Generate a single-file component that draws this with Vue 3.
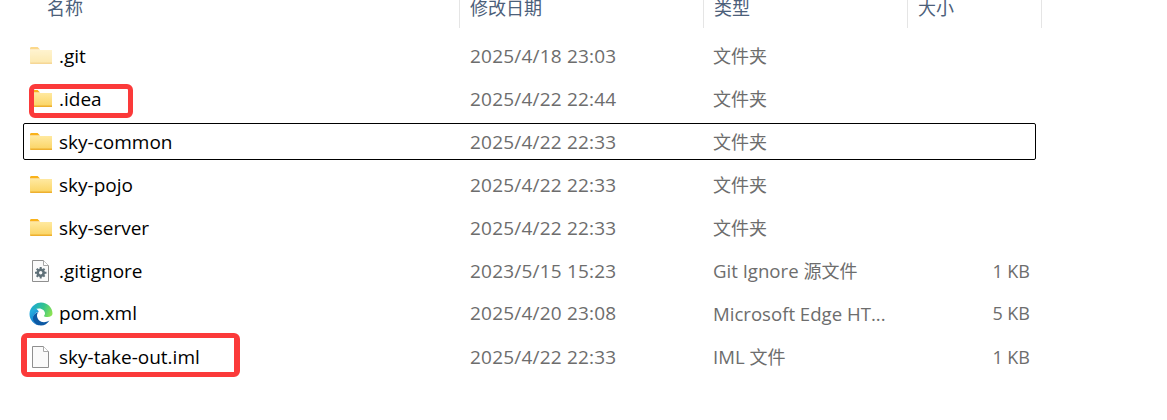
<script setup>
const rows = [
  { name: '.git', date: '2025/4/18 23:03', cjk: '文件夹', size: '', icon: 'folder', faded: true },
  { name: '.idea', date: '2025/4/22 22:44', cjk: '文件夹', size: '', icon: 'folder' },
  { name: 'sky-common', date: '2025/4/22 22:33', cjk: '文件夹', size: '', icon: 'folder', selected: true },
  { name: 'sky-pojo', date: '2025/4/22 22:33', cjk: '文件夹', size: '', icon: 'folder' },
  { name: 'sky-server', date: '2025/4/22 22:33', cjk: '文件夹', size: '', icon: 'folder' },
  { name: '.gitignore', date: '2023/5/15 15:23', latin: 'Git Ignore ', cjk: '源文件', size: '1 KB', icon: 'gear' },
  { name: 'pom.xml', date: '2025/4/20 23:08', latin: 'Microsoft Edge HT...', size: '5 KB', icon: 'edge' },
  { name: 'sky-take-out.iml', date: '2025/4/22 22:33', latin: 'IML ', cjk: '文件', size: '1 KB', icon: 'file' },
]
</script>

<template>
  <div class="page">
    <header class="head">
      <div class="hcell hname">名称</div>
      <div class="hcell">修改日期</div>
      <div class="hcell">类型</div>
      <div class="hcell hlast">大小</div>
    </header>
    <ul class="list">
      <li v-for="r in rows" :key="r.name" class="row" :class="{ selected: r.selected }">
        <div class="name">
          <svg v-if="r.icon === 'folder'" class="icon" :class="{ faded: r.faded }" viewBox="0 1 24 24">
            <defs>
              <linearGradient :id="'fg' + r.name" x1="0" y1="0" x2="0" y2="1">
                <stop offset="0" stop-color="#ffe9a0" />
                <stop offset="1" stop-color="#fbd566" />
              </linearGradient>
            </defs>
            <path d="M1 5.500C1 4.700 1.600 4 2.400 4h6.200l2.400 2.400H1z" fill="#f9b21a" />
            <path d="M1 7h22v13H2c-.6 0-1-.4-1-1z" :fill="'url(#fg' + r.name + ')'" />
            <path d="M1 19.600h22V21H2c-.6 0-1-.5-1-1z" fill="#eeb02f" />
          </svg>
          <svg v-else-if="r.icon === 'gear'" class="icon" viewBox="0 0 24 24">
            <path d="M3.500 1.500h11l5 5v16h-16z" fill="#fafafa" stroke="#8f8f8f" />
            <path d="M14.500 1.500v5h5" fill="#fff" stroke="#a8a8a8" />
            <circle cx="11.700" cy="13.700" r="3" fill="none" stroke="#5f7078" stroke-width="2.600" />
            <path d="M11.700 8v2.500M11.700 17v2.500M6 13.700h2.500M15 13.700h2.500M7.700 9.700l1.600 1.600M14 16l1.600 1.600M7.700 17.700l1.600-1.600M14 11.300l1.600-1.600" stroke="#5f7078" stroke-width="2" />
          </svg>
          <svg v-else-if="r.icon === 'edge'" class="icon" viewBox="0 0 24 24">
            <defs>
              <linearGradient id="eb" x1="0.2" y1="0" x2="0.6" y2="1">
                <stop offset="0" stop-color="#2dc0e8" />
                <stop offset="1" stop-color="#0f72c6" />
              </linearGradient>
              <linearGradient id="eg" x1="0" y1="0.3" x2="1" y2="0.6">
                <stop offset="0" stop-color="#1ba6d8" />
                <stop offset="0.55" stop-color="#33c48c" />
                <stop offset="1" stop-color="#8be253" />
              </linearGradient>
            </defs>
            <path d="M20.500 18.500C18.500 19.800 16.500 20.200 15 20.200 11 20.200 8 17 8 13.500 8 12 8.700 11 9.500 10 6 11 3.500 13.500 3.500 16.500 3.500 20 7 23.500 12 23.500c3.500 0 6.500-2 8.500-5z" fill="#0c59a4" />
            <path d="M10.500 23.400C5 22.700.5 18 .5 12 .5 8.500 2 5.500 4.500 3.500L10 9.500C6.500 10.500 4 13.500 4 16.500c0 3 2.500 5.800 6.500 6.900z" fill="url(#eb)" />
            <path d="M1.500 9C3 3.800 7.500.5 12 .5c6.500 0 11.500 5 11.500 11 0 2-2 3.500-5 3.500-2 0-3.700-.5-3.700-1 .7-.7 1.200-1.500 1.200-2.500C16 9 13.500 6.500 10 6.500 7 6.500 4 7.500 1.500 9z" fill="url(#eg)" />
          </svg>
          <svg v-else class="icon" viewBox="0 0 24 24">
            <path d="M3.500 1.500h11l5 5v16h-16z" fill="#fafafa" stroke="#8f8f8f" />
            <path d="M14.500 1.500v5h5" fill="#fff" stroke="#a8a8a8" />
          </svg>
          <span class="fname">{{ r.name }}</span>
        </div>
        <div class="cell date">{{ r.date }}</div>
        <div class="cell type"><span v-if="r.latin">{{ r.latin }}</span><span v-if="r.cjk" class="cjk">{{ r.cjk }}</span></div>
        <div class="cell size">{{ r.size }}</div>
      </li>
      <li class="mark mark-idea" aria-hidden="true"></li>
      <li class="mark mark-iml" aria-hidden="true"></li>
    </ul>
  </div>
</template>

<style>
html, body { background: #fff; }
</style>

<style scoped>
.page {
  width: 1167px;
  height: 420px;
  overflow: hidden;
  background: #fff;
  font-family: "Open Sans", "Noto Sans CJK SC", sans-serif;
  font-size: 19px;
  position: relative;
}
.head {
  display: grid;
  grid-template-columns: 459px 244px 204px 135px;
  height: 28px;
}
.hcell {
  border-left: 1px solid #e5e5e5;
  padding: 0 0 0 10px;
  color: #4c607a;
  font-size: 18px;
  line-height: 16px;
  height: 28px;
  box-sizing: border-box;
}
.hname {
  border-left: 0;
  padding-left: 47px;
}
.hlast {
  border-right: 1px solid #e5e5e5;
}
.list {
  list-style: none;
  margin: 0;
  padding: 9px 0 0 23px;
  width: 1013px;
  display: flex;
  flex-direction: column;
  gap: 6px;
  position: relative;
}
.row {
  display: grid;
  grid-template-columns: 436px 244px 204px 129px;
  height: 37px;
  align-items: center;
  box-sizing: border-box;
  color: #6d6d6d;
  line-height: 37px;
}
.selected {
  outline: 1px solid #000;
  outline-offset: -1px;
  border-radius: 2px;
}
.name {
  display: flex;
  align-items: center;
  padding-left: 6px;
  color: #000;
}
.icon {
  width: 24px;
  height: 24px;
  flex: none;
}
.faded {
  opacity: 0.5;
}
.fname {
  margin-left: 6px;
}
.cell {
  padding-left: 11px;
  white-space: nowrap;
}
.date {
  letter-spacing: 0.2px;
}
.type {
  padding-left: 10px;
  font-size: 18.6px;
}
.cjk {
  font-size: 18px;
}
.size {
  text-align: right;
  padding-right: 6px;
  font-size: 18px;
}
.mark {
  position: absolute;
  box-sizing: border-box;
  border: 5px solid #fb3a3a;
  border-radius: 6px;
}
.mark-idea {
  left: 29px;
  top: 56px;
  width: 104px;
  height: 34px;
}
.mark-iml {
  left: 21px;
  top: 305px;
  width: 219px;
  height: 44px;
  border-left-width: 6px;
  border-right-width: 6px;
}
</style>
